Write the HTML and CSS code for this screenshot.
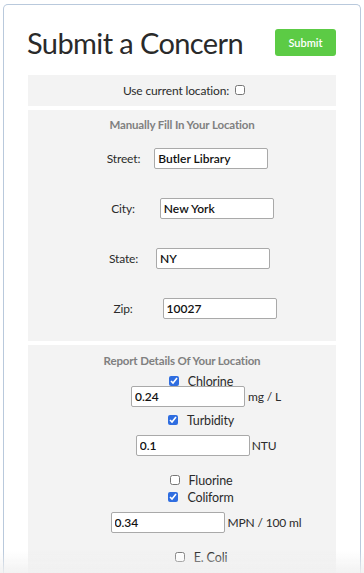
FILE: index.html
```html
<!DOCTYPE html>
<html>
<head>
<meta charset="utf-8">
<link rel="stylesheet" href="styles.css">
</head>
<body>
<div class="card">
  <div class="header">
    <h1 class="title">Submit a Concern</h1>
    <button class="submit">Submit</button>
  </div>
  <div class="panel panel-current">
    <label class="current">Use current location: <input type="checkbox" class="check"></label>
  </div>
  <div class="panel panel-manual">
    <div class="heading">Manually Fill In Your Location</div>
    <div class="row row-street"><span class="lbl">Street:</span><input class="field" value="Butler Library"></div>
    <div class="row row-city"><span class="lbl">City:</span><input class="field" value="New York"></div>
    <div class="row row-state"><span class="lbl">State:</span><input class="field" value="NY"></div>
    <div class="row row-zip"><span class="lbl">Zip:</span><input class="field" value="10027"></div>
  </div>
  <div class="panel panel-report">
    <div class="heading">Report Details Of Your Location</div>
    <label class="crow crow-first"><input type="checkbox" class="check" checked><span>Chlorine</span></label>
    <div class="mrow mrow-cl"><input class="field" value="0.24"><span class="unit">mg / L</span></div>
    <label class="crow crow-turb"><input type="checkbox" class="check" checked><span>Turbidity</span></label>
    <div class="mrow mrow-ntu"><input class="field" value="0.1"><span class="unit">NTU</span></div>
    <label class="crow crow-fl"><input type="checkbox" class="check"><span>Fluorine</span></label>
    <label class="crow"><input type="checkbox" class="check" checked><span>Coliform</span></label>
    <div class="mrow mrow-mpn"><input class="field" value="0.34"><span class="unit">MPN / 100 ml</span></div>
    <label class="crow crow-ecoli"><input type="checkbox" class="check"><span>E. Coli</span></label>
  </div>
</div>
<div class="fade"></div>
</body>
</html>
```
FILE: styles.css
```css
* { box-sizing: border-box; }
html, body { margin: 0; padding: 0; background: #fff; }
body {
  font-family: "Lato", "Open Sans", sans-serif;
  font-size: 12px;
  letter-spacing: -0.15px;
  color: #2b2b2b;
  overflow: hidden;
  height: 573px;
}
.card {
  margin: 4px 3px 0 3px;
  border: 1.5px solid #b9c9dc;
  border-bottom: none;
  border-radius: 5px 5px 0 0;
  height: 600px;
  padding: 0 24px;
}
.header {
  display: flex;
  justify-content: space-between;
  align-items: flex-start;
  padding-top: 24px;
  height: 69.5px;
}
.title {
  margin: -4px 0 0 -1px;
  font-weight: 400;
  font-size: 29px;
  line-height: 36px;
  color: #2a2a2a;
  letter-spacing: -0.6px;
}
.submit {
  width: 61px;
  height: 27px;
  border: none;
  border-radius: 3px;
  background: #5ccb45;
  color: #fff;
  font-family: inherit;
  font-size: 11px;
  font-weight: 600;
  letter-spacing: 0;
  padding: 0;
}
.panel {
  background: #f3f3f3;
  margin-bottom: 4px;
}
.panel-current {
  height: 31px;
  display: flex;
  align-items: center;
  justify-content: center;
}
.current { display: flex; align-items: center; gap: 6px; padding-left: 4px; }
.check {
  margin: 0;
  width: 10px;
  height: 10px;
  accent-color: #2f6de0;
}
.heading {
  text-align: center;
  font-weight: 700;
  color: #808080;
  font-size: 11.5px;
  line-height: 16px;
}
.panel-manual {
  height: 231px;
  padding-top: 7px;
  display: flex;
  flex-direction: column;
}
.row {
  display: flex;
  justify-content: center;
  align-items: center;
  height: 21px;
  margin-top: 29px;
}
.row-street { margin-top: 15px; gap: 14px; padding-left: 11px; }
.row-city { gap: 25px; padding-left: 21px; }
.row-state { gap: 18px; padding-left: 15px; }
.row-zip { gap: 30px; padding-left: 26px; }
.field {
  width: 114px;
  height: 21px;
  border: 1px solid #a9a9a9;
  border-radius: 2px;
  background: #fff;
  font-family: inherit;
  font-size: 12px;
  font-weight: 600;
  color: #111;
  padding: 0 3px;
}
.lbl { color: #2b2b2b; }
.panel-report {
  height: 240px;
  padding-top: 8px;
  display: flex;
  flex-direction: column;
  align-items: center;
}
.crow {
  display: flex;
  align-items: center;
  gap: 9px;
  height: 17px;
  font-size: 12.5px;
  padding-left: 38px;
}
.crow-first { margin-top: 4px; }
.crow-turb { margin-top: 4.5px; }
.crow-fl { margin-top: 15.5px; }
.crow-ecoli { margin-top: 15.5px; }
.mrow {
  display: flex;
  align-items: center;
  gap: 3px;
  height: 21px;
  padding-left: 48px;
}
.mrow-cl { margin-top: -3.5px; }
.mrow-ntu { margin-top: 6.5px; gap: 2px; }
.mrow-mpn { margin-top: 6.5px; }
.unit { font-size: 12px; }
.fade {
  position: fixed;
  left: 0;
  right: 0;
  bottom: 0;
  height: 22px;
  background: linear-gradient(to bottom, rgba(255,255,255,0), rgba(240,240,240,0.85));
  pointer-events: none;
}
```
